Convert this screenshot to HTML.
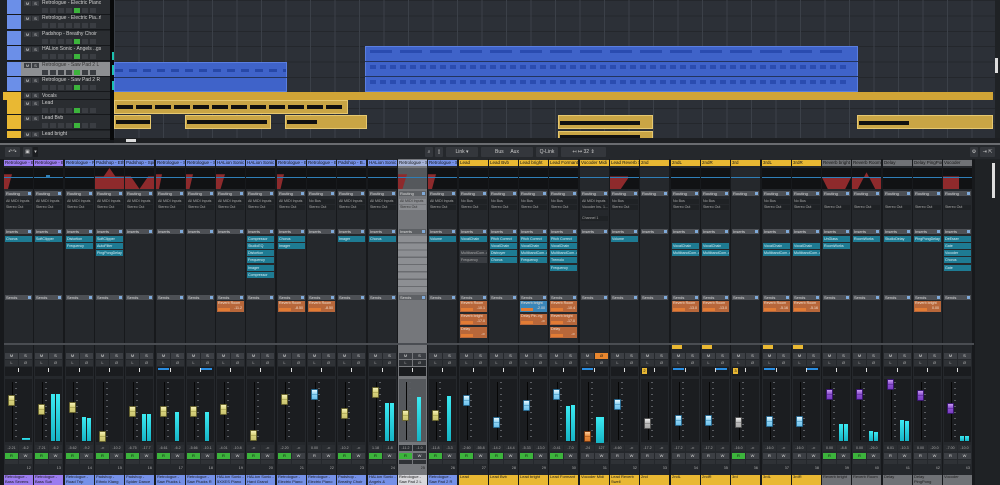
<!DOCTYPE html>
<html><head><meta charset="utf-8"><style>
body{margin:0;width:1000px;height:485px;background:#17191c;position:relative;overflow:hidden;font-family:"Liberation Sans",sans-serif}
div,b,i,u,s,em,q{position:absolute;display:block;font-style:normal;text-decoration:none;font-weight:normal;box-sizing:border-box;white-space:nowrap;overflow:hidden}
q::before,q::after{content:none}
.tr{left:21px;width:89px;height:15px;background:#2a2d31;border-bottom:1px solid #16181b}
.cs{left:7px;width:14px;height:15px;background:#6b8fe8;border-bottom:1px solid #16181b}
.tr .m{left:3px;top:1px;width:7px;height:5px;background:#3b3e43;color:#ddd;font-size:4px;line-height:5px;text-align:center}
.tr .s{left:11px;top:1px;width:7px;height:5px;background:#3b3e43;color:#ddd;font-size:4px;line-height:5px;text-align:center}
.tr .t{left:21px;top:0;color:#cfcfcf;font-size:5px;line-height:7px}
.tr .ic{left:21px;top:8px;width:56px;height:5px;background:repeating-linear-gradient(90deg,#3a3d42 0 6px,transparent 6px 8px)}
.tr .gr{left:53px;top:8px;width:6px;height:5px;background:#3cb43c}
.ch{top:159px;width:29px;height:326px;background:#25282c}
.n{left:0;top:1px;width:29px;height:6px;font-size:4.5px;line-height:6px;color:#151515;padding-left:1px}
.e{left:0;top:9px;width:29px;height:21px;background:#111214}
.e::after{content:"";position:absolute;left:0;right:0;top:9px;height:1px;background:#2f7fb8}
.rd{left:0;top:0;height:21px;background:#8e2a2c;clip-path:polygon(0 30%,100% 30%,50% 100%,0 100%)}
.h{left:1px;width:27px;height:5px;background:#4d5055;color:#ddd;font-size:4px;line-height:5px;padding-left:1px}
.h::after{content:"";position:absolute;right:1px;top:1px;width:3px;height:3px;background:#7fa9d8}
.l{left:1px;width:27px;height:5px;background:#1f2225;color:#aaa;font-size:3.6px;line-height:5px;padding-left:1px}
.in{left:1px;width:27px;height:6px;background:#1e7b93;color:#d8eef4;font-size:3.6px;line-height:6px;padding-left:1px}
.in.x{background:#3a3d42;color:#aaa}
.sd{left:1px;width:27px;height:11px;background:#b8673a;color:#f3e0d0;font-size:3.6px;line-height:5px;padding-left:1px}
.sd::after{content:"";position:absolute;left:1px;bottom:1px;width:12px;height:3px;background:#e27c35}
.sd.b{background:#3a86b8}
.ms{left:1px;top:194px;width:27px;height:6px}
.ls{left:1px;top:201px;width:27px;height:6px}
.ms q,.ls q,.rw q,.v q{top:0;width:13px;height:6px;background:#3c3f44;color:#ddd;font-size:4px;line-height:6px;text-align:center}
.ls q{background:#2f3236;color:#aaa}
.ms q+q,.ls q+q,.rw q+q,.v q+q{left:14px}
.pan{left:1px;top:208px;width:27px;height:9px;background:#1a1c1f}
.pan::after{content:"";position:absolute;left:13px;top:1px;width:1px;height:4px;background:#ddd}
.pb{top:209px;height:2px;width:11px;background:#2a8de0}
.fd{left:1px;top:220px;width:27px;height:63px;background:#1b1d20}
.fd::before{content:"";position:absolute;left:7px;top:3px;width:1px;height:58px;background:#060606}
.fd::after{content:"";position:absolute;left:10px;top:3px;width:2px;height:58px;background:repeating-linear-gradient(#5a5d62 0 1px,transparent 1px 6px)}
.cap{left:4px;width:7px;height:11px;border-radius:1px;background:linear-gradient(#f4f0b8,#d8d27a 45%,#8a8540 50%,#d8d27a 55%,#c8c270);border:1px solid #6a6630}
.cap.bl{background:linear-gradient(#e8f8ff,#8fd4f4 45%,#2a7aa8 50%,#8fd4f4 55%,#6cc0ea);border-color:#2a6a90}
.cap.pu{background:linear-gradient(#c89af0,#8a4ed0 45%,#4a2080 50%,#8a4ed0 55%,#7a3ec0);border-color:#3a1870}
.cap.gy{background:linear-gradient(#eee,#bbb 45%,#666 50%,#bbb 55%,#aaa);border-color:#555}
.cap.or{background:linear-gradient(#ffd0a0,#e88a3a 45%,#8a4010 50%,#e88a3a 55%,#d87a30);border-color:#7a3a10}
.mt{width:4px;background:linear-gradient(#3ceaf2,#16b4c6)}
.v{left:1px;top:286px;width:27px;height:6px}
.v q{background:#2a2d31;color:#aaa;font-size:3.6px}
.rw{left:1px;top:294px;width:27px;height:6px}
.rw q.g{background:#3cb43c;color:#111}
.ic2{left:1px;top:301px;width:27px;height:4px;background:repeating-linear-gradient(90deg,#2f3236 0 13px,transparent 13px 14px)}
.num{top:306px;right:2px;left:auto;color:#aaa;font-size:4px;line-height:6px}
.bn{left:0;top:316px;width:29px;height:10px;font-size:4px;line-height:4.6px;color:#1a1a1a;padding:0 1px;white-space:normal}
.P{background:#9b7cf0}.B{background:#7591e8}.Y{background:#e9b833}.G{background:#707276}
.tb{top:147px;height:10px;background:#34373c;color:#ccc;font-size:5px;line-height:10px;text-align:center;border-radius:1px}
</style></head><body>

<!-- ARRANGER -->
<div style="left:0;top:0;width:113px;height:140px;background:#1f2225"></div>
<div class="cs" style="top:0"></div><div class="tr" style="top:0"><q class="m">M</q><q class="s">S</q><em class="t">Retrologue - Electric Piano</em><b class="ic"></b><b class="gr"></b></div>
<div class="cs" style="top:15px"></div><div class="tr" style="top:15px"><q class="m">M</q><q class="s">S</q><em class="t">Retrologue - Electric Pia..rl</em><b class="ic"></b><b class="gr" style="background:#3a3d42"></b></div>
<div class="cs" style="top:31px"></div><div class="tr" style="top:31px"><q class="m">M</q><q class="s">S</q><em class="t">Padshop - Breathy Choir</em><b class="ic"></b><b class="gr"></b></div>
<div class="cs" style="top:46px"></div><div class="tr" style="top:46px"><q class="m">M</q><q class="s">S</q><em class="t">HALion Sonic - Angels ..gs</em><b class="ic"></b><b class="gr"></b></div>
<div class="cs" style="top:62px"></div><div class="tr" style="top:62px;background:#8d8f92"><q class="m">M</q><q class="s">S</q><em class="t" style="color:#333">Retrologue - Saw Pad 2 L</em><b class="ic"></b><b class="gr"></b></div>
<div class="cs" style="top:77px"></div><div class="tr" style="top:77px"><q class="m">M</q><q class="s">S</q><em class="t">Retrologue - Saw Pad 2 R</em><b class="ic"></b><b class="gr"></b></div>
<div style="left:3px;top:92px;width:18px;height:8px;background:#e9b833"></div>
<div class="tr" style="top:92px;height:8px"><q class="m">M</q><q class="s">S</q><em class="t" style="line-height:8px">Vocals</em></div>
<div class="cs" style="top:100px;background:#e9b833"></div><div class="tr" style="top:100px"><q class="m">M</q><q class="s">S</q><em class="t">Lead</em><b class="ic"></b><b class="gr"></b></div>
<div class="cs" style="top:115px;background:#e9b833"></div><div class="tr" style="top:115px"><q class="m">M</q><q class="s">S</q><em class="t">Lead Bvb</em><b class="ic"></b><b class="gr"></b></div>
<div class="cs" style="top:131px;height:8px;background:#e9b833"></div><div class="tr" style="top:131px;height:8px"><q class="m">M</q><q class="s">S</q><em class="t">Lead bright</em></div>
<div style="left:110px;top:0;width:4px;height:140px;background:#08090a"></div>
<div style="left:112px;top:52px;width:2px;height:8px;background:#1bc0b0"></div>
<div style="left:112px;top:65px;width:2px;height:10px;background:#1bc0b0"></div>
<div style="left:112px;top:81px;width:2px;height:9px;background:#1bc0b0"></div>

<div style="left:114px;top:0;width:881px;height:138px;background:#2c3037;background-image:repeating-linear-gradient(90deg,#3b4048 0 1px,transparent 1px 24.5px),repeating-linear-gradient(#24272c 0 1px,transparent 1px 15.4px)"></div>
<div style="left:114px;top:62px;width:173px;height:30px;background:#3f63c9;border:1px solid #5a7ee0;background-image:repeating-linear-gradient(90deg,#2748a8 0 8px,transparent 8px 14px);background-size:100% 3px;background-repeat:repeat-x;background-position:0 6px"></div>
<div style="left:114px;top:77px;width:173px;height:1px;background:#23345e"></div>
<div style="left:365px;top:46px;width:493px;height:46px;background:#3f63c9;border:1px solid #5a7ee0"></div>
<div style="left:370px;top:50px;width:480px;height:3px;background:repeating-linear-gradient(90deg,#2a4cb0 0 22px,transparent 22px 30px)"></div>
<div style="left:370px;top:65px;width:480px;height:4px;background:repeating-linear-gradient(90deg,#2a4cb0 0 6px,transparent 6px 10px)"></div>
<div style="left:370px;top:80px;width:480px;height:4px;background:repeating-linear-gradient(90deg,#2a4cb0 0 6px,transparent 6px 10px)"></div>
<div style="left:365px;top:61px;width:493px;height:1px;background:#23345e"></div>
<div style="left:365px;top:76px;width:493px;height:1px;background:#23345e"></div>
<div style="left:114px;top:92px;width:879px;height:8px;background:#d1a436"></div>
<div style="left:114px;top:100px;width:234px;height:14px;background:#c9a545;border:1px solid #e6c870"><b style="left:2px;top:4px;width:228px;height:4px;background:repeating-linear-gradient(90deg,#111 0 16px,transparent 16px 19px)"></b></div>
<div style="left:114px;top:115px;width:37px;height:14px;background:#c9a545;border:1px solid #e6c870"><b style="left:1px;top:4px;width:34px;height:4px;background:#111"></b></div>
<div style="left:185px;top:115px;width:86px;height:14px;background:#c9a545;border:1px solid #e6c870"><b style="left:1px;top:4px;width:80px;height:4px;background:#111"></b></div>
<div style="left:285px;top:115px;width:82px;height:14px;background:#c9a545;border:1px solid #e6c870"><b style="left:1px;top:4px;width:30px;height:4px;background:#111"></b></div>
<div style="left:558px;top:115px;width:95px;height:14px;background:#c9a545;border:1px solid #e6c870"><b style="left:1px;top:5px;width:80px;height:4px;background:#111"></b></div>
<div style="left:558px;top:131px;width:95px;height:8px;background:#c9a545;border:1px solid #e6c870"><b style="left:1px;top:3px;width:80px;height:4px;background:#111"></b></div>
<div style="left:857px;top:115px;width:136px;height:14px;background:#c9a545;border:1px solid #e6c870"><b style="left:1px;top:5px;width:50px;height:4px;background:#111"></b></div>
<div style="left:995px;top:0;width:5px;height:140px;background:#1f2225"></div>
<div style="left:995px;top:58px;width:3px;height:15px;background:#ddd"></div>
<div style="left:114px;top:138px;width:886px;height:5px;background:#1d1f22"></div>
<div style="left:126px;top:139px;width:10px;height:3px;background:#ddd"></div>
<div style="left:0;top:143px;width:1000px;height:2px;background:#6a6c70"></div>

<!-- MIXER TOOLBAR -->
<div style="left:0;top:145px;width:1000px;height:14px;background:#25282c"></div>
<div class="tb" style="left:5px;width:15px">↶↷</div>
<div class="tb" style="left:23px;width:9px">▣</div><div class="tb" style="left:33px;width:5px;background:#1b1d20">▾</div>
<div class="tb" style="left:425px;width:8px">⌕</div><div class="tb" style="left:435px;width:8px">▯</div>
<div class="tb" style="left:446px;width:32px">Link ▾</div>
<div class="tb" style="left:481px;width:52px">Bus &nbsp; &nbsp; Aux</div>
<div class="tb" style="left:536px;width:22px">Q-Link</div>
<div class="tb" style="left:561px;width:45px">↤ ↦ 32 ⇕</div>
<div class="tb" style="left:970px;width:8px">⚙</div>
<div class="tb" style="left:980px;width:15px">⇥ ⇱</div>
<div style="left:975px;top:159px;width:25px;height:326px;background:#1f2225"></div>
<div style="left:992px;top:163px;width:3px;height:35px;background:#ddd"></div>

<!-- CHANNELS -->
<div class="ch" style="left:4px"><i class="n P">Retrologue - B..</i><b class="e"><b class="rd" style="width:8px"></b></b><u class="h" style="top:32px">Routing</u><em class="l" style="top:40px">All MIDI Inputs</em><em class="l" style="top:46px">Stereo Out</em><u class="h" style="top:70px">Inserts</u><s class="in" style="top:77px">Chorus</s><u class="h" style="top:136px">Sends</u><b class="ms"><q>M</q><q>S</q></b><b class="ls"><q>L</q><q>Ø</q></b><b class="pan"></b><b class="fd"></b><b class="cap" style="top:236px"></b><b class="mt" style="left:18px;top:279px;height:2px;width:8px"></b><b class="v"><q>-2.21</q><q>-6.2</q></b><b class="rw"><q class="g">R</q><q>W</q></b><b class="ic2"></b><em class="num">12</em><i class="bn P">Retrologue - Bass Sevens</i></div>
<div class="ch" style="left:34px"><i class="n P">Retrologue - B..</i><b class="e"><b style="left:12px;top:7px;width:4px;height:2px;background:#2f7fb8"></b></b><u class="h" style="top:32px">Routing</u><em class="l" style="top:40px">All MIDI Inputs</em><em class="l" style="top:46px">Stereo Out</em><u class="h" style="top:70px">Inserts</u><s class="in" style="top:77px">SoftClipper</s><u class="h" style="top:136px">Sends</u><b class="ms"><q>M</q><q>S</q></b><b class="ls"><q>L</q><q>Ø</q></b><b class="pan"></b><b class="fd"></b><b class="cap" style="top:245px"></b><b class="mt" style="left:17px;top:235px;height:47px"></b><b class="mt" style="left:22px;top:235px;height:47px"></b><b class="v"><q>-7.21</q><q>-6.2</q></b><b class="rw"><q class="g">R</q><q>W</q></b><b class="ic2"></b><em class="num">13</em><i class="bn P">Retrologue - Bass Sub</i></div>
<div class="ch" style="left:65px"><i class="n B">Retrologue - R..</i><b class="e"></b><u class="h" style="top:32px">Routing</u><em class="l" style="top:40px">All MIDI Inputs</em><em class="l" style="top:46px">Stereo Out</em><u class="h" style="top:70px">Inserts</u><s class="in" style="top:77px">Distortion</s><s class="in" style="top:84px">Frequency</s><u class="h" style="top:136px">Sends</u><b class="ms"><q>M</q><q>S</q></b><b class="ls"><q>L</q><q>Ø</q></b><b class="pan"></b><b class="fd"></b><b class="cap" style="top:243px"></b><b class="mt" style="left:17px;top:258px;height:24px"></b><b class="mt" style="left:22px;top:259px;height:23px"></b><b class="v"><q>-5.62</q><q>-9.2</q></b><b class="rw"><q class="g">R</q><q>W</q></b><b class="ic2"></b><em class="num">14</em><i class="bn B">Retrologue - Road Trip</i></div>
<div class="ch" style="left:95px"><i class="n B">Padshop - Eth..</i><b class="e"><b class="rd" style="width:29px;clip-path:polygon(0 40%,30% 40%,50% 0,70% 40%,100% 40%,100% 100%,0 100%)"></b></b><u class="h" style="top:32px">Routing</u><em class="l" style="top:40px">All MIDI Inputs</em><em class="l" style="top:46px">Stereo Out</em><u class="h" style="top:70px">Inserts</u><s class="in" style="top:77px">SoftClipper</s><s class="in" style="top:84px">AutoFilter</s><s class="in" style="top:91px">PingPongDelay</s><u class="h" style="top:136px">Sends</u><b class="ms"><q>M</q><q>S</q></b><b class="ls"><q>L</q><q>Ø</q></b><b class="pan"></b><b class="fd"></b><b class="cap" style="top:272px"></b><b class="v"><q>-∞</q><q>-10.2</q></b><b class="rw"><q class="g">R</q><q>W</q></b><b class="ic2"></b><em class="num">15</em><i class="bn B">Padshop - Ethnic Klang</i></div>
<div class="ch" style="left:125px"><i class="n B">Padshop - Spid..</i><b class="e"><b class="rd" style="width:29px;clip-path:polygon(0 40%,20% 40%,50% 100%,80% 40%,100% 40%,100% 100%,0 100%)"></b></b><u class="h" style="top:32px">Routing</u><em class="l" style="top:40px">All MIDI Inputs</em><em class="l" style="top:46px">Stereo Out</em><u class="h" style="top:70px">Inserts</u><u class="h" style="top:136px">Sends</u><b class="ms"><q>M</q><q>S</q></b><b class="ls"><q>L</q><q>Ø</q></b><b class="pan"></b><b class="fd"></b><b class="cap" style="top:247px"></b><b class="mt" style="left:17px;top:255px;height:27px"></b><b class="mt" style="left:22px;top:255px;height:27px"></b><b class="v"><q>-6.75</q><q>-17.7</q></b><b class="rw"><q class="g">R</q><q>W</q></b><b class="ic2"></b><em class="num">16</em><i class="bn B">Padshop - Spider Dance</i></div>
<div class="ch" style="left:156px"><i class="n B">Retrologue - S..</i><b class="e"><b class="rd" style="width:6px"></b></b><u class="h" style="top:32px">Routing</u><em class="l" style="top:40px">All MIDI Inputs</em><em class="l" style="top:46px">Stereo Out</em><u class="h" style="top:70px">Inserts</u><u class="h" style="top:136px">Sends</u><b class="ms"><q>M</q><q>S</q></b><b class="ls"><q>L</q><q>Ø</q></b><b class="pan"></b><b class="pb" style="left:2px"></b><b class="fd"></b><b class="cap" style="top:247px"></b><b class="mt" style="left:19px;top:253px;height:29px"></b><b class="v"><q>-6.61</q><q>-6.2</q></b><b class="rw"><q class="g">R</q><q>W</q></b><b class="ic2"></b><em class="num">17</em><i class="bn B">Retrologue - Saw Plucks L</i></div>
<div class="ch" style="left:186px"><i class="n B">Retrologue - S..</i><b class="e"><b class="rd" style="width:7px"></b></b><u class="h" style="top:32px">Routing</u><em class="l" style="top:40px">All MIDI Inputs</em><em class="l" style="top:46px">Stereo Out</em><u class="h" style="top:70px">Inserts</u><u class="h" style="top:136px">Sends</u><b class="ms"><q>M</q><q>S</q></b><b class="ls"><q>L</q><q>Ø</q></b><b class="pan"></b><b class="pb" style="left:15px"></b><b class="fd"></b><b class="cap" style="top:247px"></b><b class="mt" style="left:19px;top:253px;height:29px"></b><b class="v"><q>-5.66</q><q>-10.1</q></b><b class="rw"><q class="g">R</q><q>W</q></b><b class="ic2"></b><em class="num">18</em><i class="bn B">Retrologue - Saw Plucks R</i></div>
<div class="ch" style="left:216px"><i class="n B">HALion Sonic -..</i><b class="e"><b class="rd" style="width:9px"></b></b><u class="h" style="top:32px">Routing</u><em class="l" style="top:40px">All MIDI Inputs</em><em class="l" style="top:46px">Stereo Out</em><u class="h" style="top:70px">Inserts</u><u class="h" style="top:136px">Sends</u><s class="sd" style="top:142px">Reverb Room<br><span style="float:right;margin-right:2px">-11.2</span></s><b class="ms"><q>M</q><q>S</q></b><b class="ls"><q>L</q><q>Ø</q></b><b class="pan"></b><b class="fd"></b><b class="cap" style="top:245px"></b><b class="v"><q>-4.01</q><q>-10.8</q></b><b class="rw"><q class="g">R</q><q>W</q></b><b class="ic2"></b><em class="num">19</em><i class="bn B">HALion Sonic - 5XXES Piano</i></div>
<div class="ch" style="left:246px"><i class="n B">HALion Sonic -..</i><b class="e"></b><u class="h" style="top:32px">Routing</u><em class="l" style="top:40px">All MIDI Inputs</em><em class="l" style="top:46px">Stereo Out</em><u class="h" style="top:70px">Inserts</u><s class="in" style="top:77px">Compressor</s><s class="in" style="top:84px">StudioEQ</s><s class="in" style="top:91px">Distortion</s><s class="in" style="top:98px">Frequency</s><s class="in" style="top:106px">Imager</s><s class="in" style="top:113px">Compressor</s><u class="h" style="top:136px">Sends</u><b class="ms"><q>M</q><q>S</q></b><b class="ls"><q>L</q><q>Ø</q></b><b class="pan"></b><b class="fd"></b><b class="cap" style="top:271px"></b><b class="v"><q>-∞</q><q>-∞</q></b><b class="rw"><q class="g">R</q><q>W</q></b><b class="ic2"></b><em class="num">20</em><i class="bn B">HALion Sonic - Hard Grand Piano</i></div>
<div class="ch" style="left:277px"><i class="n B">Retrologue - El..</i><b class="e"><b class="rd" style="width:7px"></b></b><u class="h" style="top:32px">Routing</u><em class="l" style="top:40px">All MIDI Inputs</em><em class="l" style="top:46px">Stereo Out</em><u class="h" style="top:70px">Inserts</u><s class="in" style="top:77px">Chorus</s><s class="in" style="top:84px">Imager</s><u class="h" style="top:136px">Sends</u><s class="sd" style="top:142px">Reverb Room<br><span style="float:right;margin-right:2px">-8.50</span></s><b class="ms"><q>M</q><q>S</q></b><b class="ls"><q>L</q><q>Ø</q></b><b class="pan"></b><b class="fd"></b><b class="cap" style="top:235px"></b><b class="v"><q>-2.20</q><q>-∞</q></b><b class="rw"><q class="g">R</q><q>W</q></b><b class="ic2"></b><em class="num">21</em><i class="bn B">Retrologue - Electric Piano</i></div>
<div class="ch" style="left:307px"><i class="n B">Retrologue - El..</i><b class="e"></b><u class="h" style="top:32px">Routing</u><em class="l" style="top:40px">No Bus</em><em class="l" style="top:46px">Stereo Out</em><u class="h" style="top:70px">Inserts</u><u class="h" style="top:136px">Sends</u><s class="sd" style="top:142px">Reverb Room<br><span style="float:right;margin-right:2px">-8.50</span></s><b class="ms"><q>M</q><q>S</q></b><b class="ls"><q>L</q><q>Ø</q></b><b class="pan"></b><b class="fd"></b><b class="cap bl" style="top:230px"></b><b class="v"><q>0.00</q><q>-∞</q></b><b class="rw"><q>R</q><q>W</q></b><b class="ic2"></b><em class="num">22</em><i class="bn B">Retrologue - Electric Piano rl</i></div>
<div class="ch" style="left:337px"><i class="n B">Padshop - B..</i><b class="e"></b><u class="h" style="top:32px">Routing</u><em class="l" style="top:40px">All MIDI Inputs</em><em class="l" style="top:46px">Stereo Out</em><u class="h" style="top:70px">Inserts</u><s class="in" style="top:77px">Imager</s><u class="h" style="top:136px">Sends</u><b class="ms"><q>M</q><q>S</q></b><b class="ls"><q>L</q><q>Ø</q></b><b class="pan"></b><b class="fd"></b><b class="cap" style="top:249px"></b><b class="v"><q>-10.2</q><q>-∞</q></b><b class="rw"><q class="g">R</q><q>W</q></b><b class="ic2"></b><em class="num">23</em><i class="bn B">Padshop - Breathy Choir</i></div>
<div class="ch" style="left:368px"><i class="n B">HALion Sonic -..</i><b class="e"></b><u class="h" style="top:32px">Routing</u><em class="l" style="top:40px">All MIDI Inputs</em><em class="l" style="top:46px">Stereo Out</em><u class="h" style="top:70px">Inserts</u><s class="in" style="top:77px">Chorus</s><u class="h" style="top:136px">Sends</u><b class="ms"><q>M</q><q>S</q></b><b class="ls"><q>L</q><q>Ø</q></b><b class="pan"></b><b class="fd"></b><b class="cap" style="top:228px"></b><b class="mt" style="left:17px;top:244px;height:38px"></b><b class="mt" style="left:22px;top:244px;height:38px"></b><b class="v"><q>1.18</q><q>-1.8</q></b><b class="rw"><q class="g">R</q><q>W</q></b><b class="ic2"></b><em class="num">24</em><i class="bn B">HALion Sonic - Angels &amp; Strings</i></div>
<div class="ch" style="left:398px;background:#75777b"><i class="n B" style="background:#a7b4d8">Retrologue - S..</i><b class="e" style="background:#55585c"><b class="rd" style="width:9px"></b></b><u class="h" style="top:32px;background:#5d6064">Routing</u><em class="l" style="top:40px;background:#8a8c90;color:#333">All MIDI Inputs</em><em class="l" style="top:46px;background:#8a8c90;color:#333">Stereo Out</em><u class="h" style="top:70px;background:#5d6064">Inserts</u><b style="left:0;top:77px;width:29px;height:56px;background:repeating-linear-gradient(#8d8f93 0 6px,#6a6c70 6px 7.3px)"></b><u class="h" style="top:136px;background:#5d6064">Sends</u><b class="ms"><q>M</q><q>S</q></b><b class="ls"><q>L</q><q>Ø</q></b><b class="pan"></b><b class="fd" style="background:#55585c"></b><b class="cap" style="top:251px"></b><b class="mt" style="left:19px;top:238px;height:44px"></b><b class="v"><q>-11.2</q><q>-1.0</q></b><b class="rw"><q class="g">R</q><q>W</q></b><b class="ic2"></b><em class="num" style="color:#222">25</em><i class="bn" style="background:#d8d8dc">Retrologue - Saw Pad 2 L</i></div>
<div class="ch" style="left:428px"><i class="n B">Retrologue - S..</i><b class="e"><b class="rd" style="width:8px"></b></b><u class="h" style="top:32px">Routing</u><em class="l" style="top:40px">All MIDI Inputs</em><em class="l" style="top:46px">Stereo Out</em><u class="h" style="top:70px">Inserts</u><s class="in" style="top:77px">Volume</s><u class="h" style="top:136px">Sends</u><b class="ms"><q>M</q><q>S</q></b><b class="ls"><q>L</q><q>Ø</q></b><b class="pan"></b><b class="fd"></b><b class="cap" style="top:251px"></b><b class="mt" style="left:19px;top:237px;height:45px"></b><b class="v"><q>-11.8</q><q>-3.3</q></b><b class="rw"><q class="g">R</q><q>W</q></b><b class="ic2"></b><em class="num">26</em><i class="bn B">Retrologue - Saw Pad 2 R</i></div>
<div class="ch" style="left:459px"><i class="n Y">Lead</i><b class="e"></b><u class="h" style="top:32px">Routing</u><em class="l" style="top:40px">No Bus</em><em class="l" style="top:46px">Stereo Out</em><u class="h" style="top:70px">Inserts</u><s class="in" style="top:77px">VocalChain</s><s class="in x" style="top:91px">MultibandCom..or</s><s class="in x" style="top:98px">Frequency</s><u class="h" style="top:136px">Sends</u><s class="sd" style="top:142px">Reverb Room<br><span style="float:right;margin-right:2px">-10.1</span></s><s class="sd" style="top:155px">Reverb bright<br><span style="float:right;margin-right:2px">-17.0</span></s><s class="sd" style="top:168px">Delay<br><span style="float:right;margin-right:2px">-∞</span></s><b class="ms"><q>M</q><q>S</q></b><b class="ls"><q>L</q><q>Ø</q></b><b class="pan"></b><b class="fd"></b><b class="cap bl" style="top:236px"></b><b class="v"><q>-2.60</q><q>-55.8</q></b><b class="rw"><q class="g">R</q><q>W</q></b><b class="ic2"></b><em class="num">27</em><i class="bn Y">Lead</i></div>
<div class="ch" style="left:489px"><i class="n Y">Lead Bvb</i><b class="e"></b><u class="h" style="top:32px">Routing</u><em class="l" style="top:40px">No Bus</em><em class="l" style="top:46px">Stereo Out</em><u class="h" style="top:70px">Inserts</u><s class="in" style="top:77px">Pitch Correct</s><s class="in" style="top:84px">VocalChain</s><s class="in" style="top:91px">Distroyer</s><s class="in" style="top:98px">Chorus</s><u class="h" style="top:136px">Sends</u><b class="ms"><q>M</q><q>S</q></b><b class="ls"><q>L</q><q>Ø</q></b><b class="pan"></b><b class="fd"></b><b class="cap bl" style="top:258px"></b><b class="v"><q>-14.2</q><q>-14.4</q></b><b class="rw"><q class="g">R</q><q>W</q></b><b class="ic2"></b><em class="num">28</em><i class="bn Y">Lead Bvb</i></div>
<div class="ch" style="left:519px"><i class="n Y">Lead bright</i><b class="e"></b><u class="h" style="top:32px">Routing</u><em class="l" style="top:40px">No Bus</em><em class="l" style="top:46px">Stereo Out</em><u class="h" style="top:70px">Inserts</u><s class="in" style="top:77px">Pitch Correct</s><s class="in" style="top:84px">VocalChain</s><s class="in" style="top:91px">MultibandCom..or</s><s class="in" style="top:98px">Frequency</s><u class="h" style="top:136px">Sends</u><s class="sd b" style="top:142px">Reverb bright<br><span style="float:right;margin-right:2px">-2.00</span></s><s class="sd" style="top:155px">Delay Pin..ng<br><span style="float:right;margin-right:2px">-∞</span></s><b class="ms"><q>M</q><q>S</q></b><b class="ls"><q>L</q><q>Ø</q></b><b class="pan"></b><b class="fd"></b><b class="cap bl" style="top:241px"></b><b class="v"><q>-5.33</q><q>-13.0</q></b><b class="rw"><q class="g">R</q><q>W</q></b><b class="ic2"></b><em class="num">29</em><i class="bn Y">Lead bright</i></div>
<div class="ch" style="left:549px"><i class="n Y">Lead Formant</i><b class="e"></b><u class="h" style="top:32px">Routing</u><em class="l" style="top:40px">No Bus</em><em class="l" style="top:46px">Stereo Out</em><u class="h" style="top:70px">Inserts</u><s class="in" style="top:77px">Pitch Correct</s><s class="in" style="top:84px">VocalChain</s><s class="in" style="top:91px">MultibandCom..or</s><s class="in" style="top:98px">Tremolo</s><s class="in" style="top:106px">Frequency</s><u class="h" style="top:136px">Sends</u><s class="sd" style="top:142px">Reverb Room<br><span style="float:right;margin-right:2px">-10.4</span></s><s class="sd" style="top:155px">Reverb bright<br><span style="float:right;margin-right:2px">-17.0</span></s><s class="sd" style="top:168px">Delay<br><span style="float:right;margin-right:2px">-∞</span></s><b class="ms"><q>M</q><q>S</q></b><b class="ls"><q>L</q><q>Ø</q></b><b class="pan"></b><b class="fd"></b><b class="cap bl" style="top:230px"></b><b class="mt" style="left:17px;top:247px;height:35px"></b><b class="mt" style="left:22px;top:246px;height:36px"></b><b class="v"><q>-0.41</q><q>-7.0</q></b><b class="rw"><q class="g">R</q><q>W</q></b><b class="ic2"></b><em class="num">30</em><i class="bn Y">Lead Formant</i></div>
<div class="ch" style="left:580px"><i class="n Y">Vocoder Midi</i><b class="e" style="background:#25282c"></b><u class="h" style="top:32px">Routing</u><em class="l" style="top:40px">All MIDI Inputs</em><em class="l" style="top:46px">Vocoder Ins. 1...</em><em class="l" style="top:57px">Channel 1</em><u class="h" style="top:70px">Inserts</u><u class="h" style="top:136px">Sends</u><b class="ms"><q>M</q><q style="background:#e8862e;color:#111">Ø</q></b><b class="ls"><q>L</q><q>Ø</q></b><b class="pan"></b><b class="pb" style="left:2px"></b><b class="fd"></b><b class="cap or" style="top:272px"></b><b class="mt" style="left:16px;top:258px;height:26px;width:8px"></b><b class="v"><q>-24</q><q>127</q></b><b class="rw"><q>R</q><q>W</q></b><b class="ic2"></b><em class="num">31</em><i class="bn Y">Vocoder Midi</i></div>
<div class="ch" style="left:610px"><i class="n Y">Lead Reverb S..</i><b class="e"><b class="rd" style="width:18px;clip-path:polygon(0 40%,100% 40%,100% 50%,60% 100%,0 100%)"></b></b><u class="h" style="top:32px">Routing</u><em class="l" style="top:40px">No Bus</em><em class="l" style="top:46px">Stereo Out</em><u class="h" style="top:70px">Inserts</u><s class="in" style="top:77px">Volume</s><u class="h" style="top:136px">Sends</u><b class="ms"><q>M</q><q>S</q></b><b class="ls"><q>L</q><q>Ø</q></b><b class="pan"></b><b class="fd"></b><b class="cap bl" style="top:240px"></b><b class="v"><q>-4.60</q><q>-∞</q></b><b class="rw"><q>R</q><q>W</q></b><b class="ic2"></b><em class="num">32</em><i class="bn Y">Lead Reverb Swell</i></div>
<div class="ch" style="left:640px"><i class="n Y">2nd</i><b class="e" style="background:#25282c"></b><u class="h" style="top:32px">Routing</u><u class="h" style="top:70px">Inserts</u><u class="h" style="top:136px">Sends</u><b class="ms"><q>M</q><q>S</q></b><b class="ls"><q>L</q><q>Ø</q></b><b class="pan"></b><b style="left:2px;top:209px;width:5px;height:6px;background:#e9b833;color:#111;font-size:4px;line-height:6px;text-align:center">2</b><b class="fd"></b><b class="cap gy" style="top:259px"></b><b class="v"><q>-17.2</q><q>-∞</q></b><b class="rw"><q>R</q><q>W</q></b><b class="ic2"></b><em class="num">33</em><i class="bn Y">2nd</i></div>
<div class="ch" style="left:671px"><i class="n Y">2ndL</i><b class="e"></b><u class="h" style="top:32px">Routing</u><em class="l" style="top:40px">No Bus</em><em class="l" style="top:46px">Stereo Out</em><u class="h" style="top:70px">Inserts</u><s class="in" style="top:84px">VocalChain</s><s class="in" style="top:91px">MultibandCom..or</s><u class="h" style="top:136px">Sends</u><s class="sd" style="top:142px">Reverb Room<br><span style="float:right;margin-right:2px">-13.0</span></s><b style="left:1px;top:186px;width:10px;height:4px;background:#e9b833"></b><b class="ms"><q>M</q><q>S</q></b><b class="ls"><q>L</q><q>Ø</q></b><b class="pan"></b><b class="pb" style="left:2px"></b><b class="fd"></b><b class="cap bl" style="top:256px"></b><b class="v"><q>-17.2</q><q>-∞</q></b><b class="rw"><q>R</q><q>W</q></b><b class="ic2"></b><em class="num">34</em><i class="bn Y">2ndL</i></div>
<div class="ch" style="left:701px"><i class="n Y">2ndR</i><b class="e"></b><u class="h" style="top:32px">Routing</u><em class="l" style="top:40px">No Bus</em><em class="l" style="top:46px">Stereo Out</em><u class="h" style="top:70px">Inserts</u><s class="in" style="top:84px">VocalChain</s><s class="in" style="top:91px">MultibandCom..or</s><u class="h" style="top:136px">Sends</u><s class="sd" style="top:142px">Reverb Room<br><span style="float:right;margin-right:2px">-13.0</span></s><b style="left:1px;top:186px;width:10px;height:4px;background:#e9b833"></b><b class="ms"><q>M</q><q>S</q></b><b class="ls"><q>L</q><q>Ø</q></b><b class="pan"></b><b class="pb" style="left:15px"></b><b class="fd"></b><b class="cap bl" style="top:256px"></b><b class="v"><q>-17.2</q><q>-∞</q></b><b class="rw"><q>R</q><q>W</q></b><b class="ic2"></b><em class="num">35</em><i class="bn Y">2ndR</i></div>
<div class="ch" style="left:731px"><i class="n Y">3rd</i><b class="e" style="background:#25282c"></b><u class="h" style="top:32px">Routing</u><u class="h" style="top:70px">Inserts</u><u class="h" style="top:136px">Sends</u><b class="ms"><q>M</q><q>S</q></b><b class="ls"><q>L</q><q>Ø</q></b><b class="pan"></b><b style="left:2px;top:209px;width:5px;height:6px;background:#e9b833;color:#111;font-size:4px;line-height:6px;text-align:center">3</b><b class="fd"></b><b class="cap gy" style="top:258px"></b><b class="v"><q>-16.0</q><q>-∞</q></b><b class="rw"><q class="g">R</q><q>W</q></b><b class="ic2"></b><em class="num">36</em><i class="bn Y">3rd</i></div>
<div class="ch" style="left:762px"><i class="n Y">3rdL</i><b class="e"></b><u class="h" style="top:32px">Routing</u><em class="l" style="top:40px">No Bus</em><em class="l" style="top:46px">Stereo Out</em><u class="h" style="top:70px">Inserts</u><s class="in" style="top:84px">VocalChain</s><s class="in" style="top:91px">MultibandCom..or</s><u class="h" style="top:136px">Sends</u><s class="sd" style="top:142px">Reverb Room<br><span style="float:right;margin-right:2px">-5.16</span></s><b style="left:1px;top:186px;width:10px;height:4px;background:#e9b833"></b><b class="ms"><q>M</q><q>S</q></b><b class="ls"><q>L</q><q>Ø</q></b><b class="pan"></b><b class="pb" style="left:2px"></b><b class="fd"></b><b class="cap bl" style="top:257px"></b><b class="v"><q>-16.0</q><q>-∞</q></b><b class="rw"><q>R</q><q>W</q></b><b class="ic2"></b><em class="num">37</em><i class="bn Y">3rdL</i></div>
<div class="ch" style="left:792px"><i class="n Y">3rdR</i><b class="e"></b><u class="h" style="top:32px">Routing</u><em class="l" style="top:40px">No Bus</em><em class="l" style="top:46px">Stereo Out</em><u class="h" style="top:70px">Inserts</u><s class="in" style="top:84px">VocalChain</s><s class="in" style="top:91px">MultibandCom..or</s><u class="h" style="top:136px">Sends</u><s class="sd" style="top:142px">Reverb Room<br><span style="float:right;margin-right:2px">-5.16</span></s><b style="left:1px;top:186px;width:10px;height:4px;background:#e9b833"></b><b class="ms"><q>M</q><q>S</q></b><b class="ls"><q>L</q><q>Ø</q></b><b class="pan"></b><b class="pb" style="left:15px"></b><b class="fd"></b><b class="cap bl" style="top:257px"></b><b class="v"><q>-16.0</q><q>-∞</q></b><b class="rw"><q>R</q><q>W</q></b><b class="ic2"></b><em class="num">38</em><i class="bn Y">3rdR</i></div>
<div class="ch" style="left:822px"><i class="n G">Reverb bright</i><b class="e"><b class="rd" style="width:29px;clip-path:polygon(0 45%,100% 45%,80% 100%,20% 100%)"></b></b><u class="h" style="top:32px">Routing</u><em class="l" style="top:46px">Stereo Out</em><u class="h" style="top:70px">Inserts</u><s class="in" style="top:77px">UnGlass</s><s class="in" style="top:84px">RoomWorks</s><u class="h" style="top:136px">Sends</u><b class="ms"><q>M</q><q>S</q></b><b class="ls"><q>L</q><q>Ø</q></b><b class="pan"></b><b class="fd"></b><b class="cap pu" style="top:230px"></b><b class="mt" style="left:17px;top:265px;height:17px"></b><b class="mt" style="left:22px;top:265px;height:17px"></b><b class="v"><q>0.00</q><q>-8.8</q></b><b class="rw"><q class="g">R</q><q>W</q></b><b class="ic2"></b><em class="num">39</em><i class="bn G">Reverb bright</i></div>
<div class="ch" style="left:852px"><i class="n G">Reverb Room</i><b class="e"><b class="rd" style="width:29px;clip-path:polygon(0 45%,100% 45%,100% 100%,80% 100%,50% 20%,20% 100%,0 100%)"></b></b><u class="h" style="top:32px">Routing</u><em class="l" style="top:46px">Stereo Out</em><u class="h" style="top:70px">Inserts</u><s class="in" style="top:77px">RoomWorks</s><u class="h" style="top:136px">Sends</u><b class="ms"><q>M</q><q>S</q></b><b class="ls"><q>L</q><q>Ø</q></b><b class="pan"></b><b class="fd"></b><b class="cap pu" style="top:230px"></b><b class="mt" style="left:17px;top:272px;height:10px"></b><b class="mt" style="left:22px;top:273px;height:9px"></b><b class="v"><q>0.00</q><q>-26.0</q></b><b class="rw"><q class="g">R</q><q>W</q></b><b class="ic2"></b><em class="num">40</em><i class="bn G">Reverb Room</i></div>
<div class="ch" style="left:883px"><i class="n G">Delay</i><b class="e"></b><u class="h" style="top:32px">Routing</u><em class="l" style="top:46px">Stereo Out</em><u class="h" style="top:70px">Inserts</u><s class="in" style="top:77px">StudioDelay</s><u class="h" style="top:136px">Sends</u><b class="ms"><q>M</q><q>S</q></b><b class="ls"><q>L</q><q>Ø</q></b><b class="pan"></b><b class="fd"></b><b class="cap pu" style="top:220px"></b><b class="mt" style="left:17px;top:261px;height:21px"></b><b class="mt" style="left:22px;top:262px;height:20px"></b><b class="v"><q>6.01</q><q>-10.3</q></b><b class="rw"><q>R</q><q>W</q></b><b class="ic2"></b><em class="num">41</em><i class="bn G">Delay</i></div>
<div class="ch" style="left:913px"><i class="n G">Delay PingPong</i><b class="e"></b><u class="h" style="top:32px">Routing</u><em class="l" style="top:46px">Stereo Out</em><u class="h" style="top:70px">Inserts</u><s class="in" style="top:77px">PingPongDelay</s><u class="h" style="top:136px">Sends</u><s class="sd" style="top:142px">Reverb bright<br><span style="float:right;margin-right:2px">0.00</span></s><b class="ms"><q>M</q><q>S</q></b><b class="ls"><q>L</q><q>Ø</q></b><b class="pan"></b><b class="fd"></b><b class="cap pu" style="top:231px"></b><b class="v"><q>0.00</q><q>-20.0</q></b><b class="rw"><q>R</q><q>W</q></b><b class="ic2"></b><em class="num">42</em><i class="bn G">Delay PingPong</i></div>
<div class="ch" style="left:943px"><i class="n G">Vocoder</i><b class="e"><b class="rd" style="width:16px;clip-path:polygon(0 40%,100% 40%,100% 100%,0 100%)"></b></b><u class="h" style="top:32px">Routing</u><em class="l" style="top:46px">Stereo Out</em><u class="h" style="top:70px">Inserts</u><s class="in" style="top:77px">DeEsser</s><s class="in" style="top:84px">Gate</s><s class="in" style="top:91px">Vocoder</s><s class="in" style="top:98px">Chorus</s><s class="in" style="top:106px">Gate</s><u class="h" style="top:136px">Sends</u><b class="ms"><q>M</q><q>S</q></b><b class="ls"><q>L</q><q>Ø</q></b><b class="pan"></b><b class="fd"></b><b class="cap pu" style="top:244px"></b><b class="mt" style="left:17px;top:277px;height:5px"></b><b class="mt" style="left:22px;top:277px;height:5px"></b><b class="v"><q>-7.00</q><q>-10.0</q></b><b class="rw"><q>R</q><q>W</q></b><b class="ic2"></b><em class="num">43</em><i class="bn G">Vocoder</i></div>

<div style="left:4px;top:343px;width:970px;height:2px;background:#4a4d52"></div>
</body></html>
